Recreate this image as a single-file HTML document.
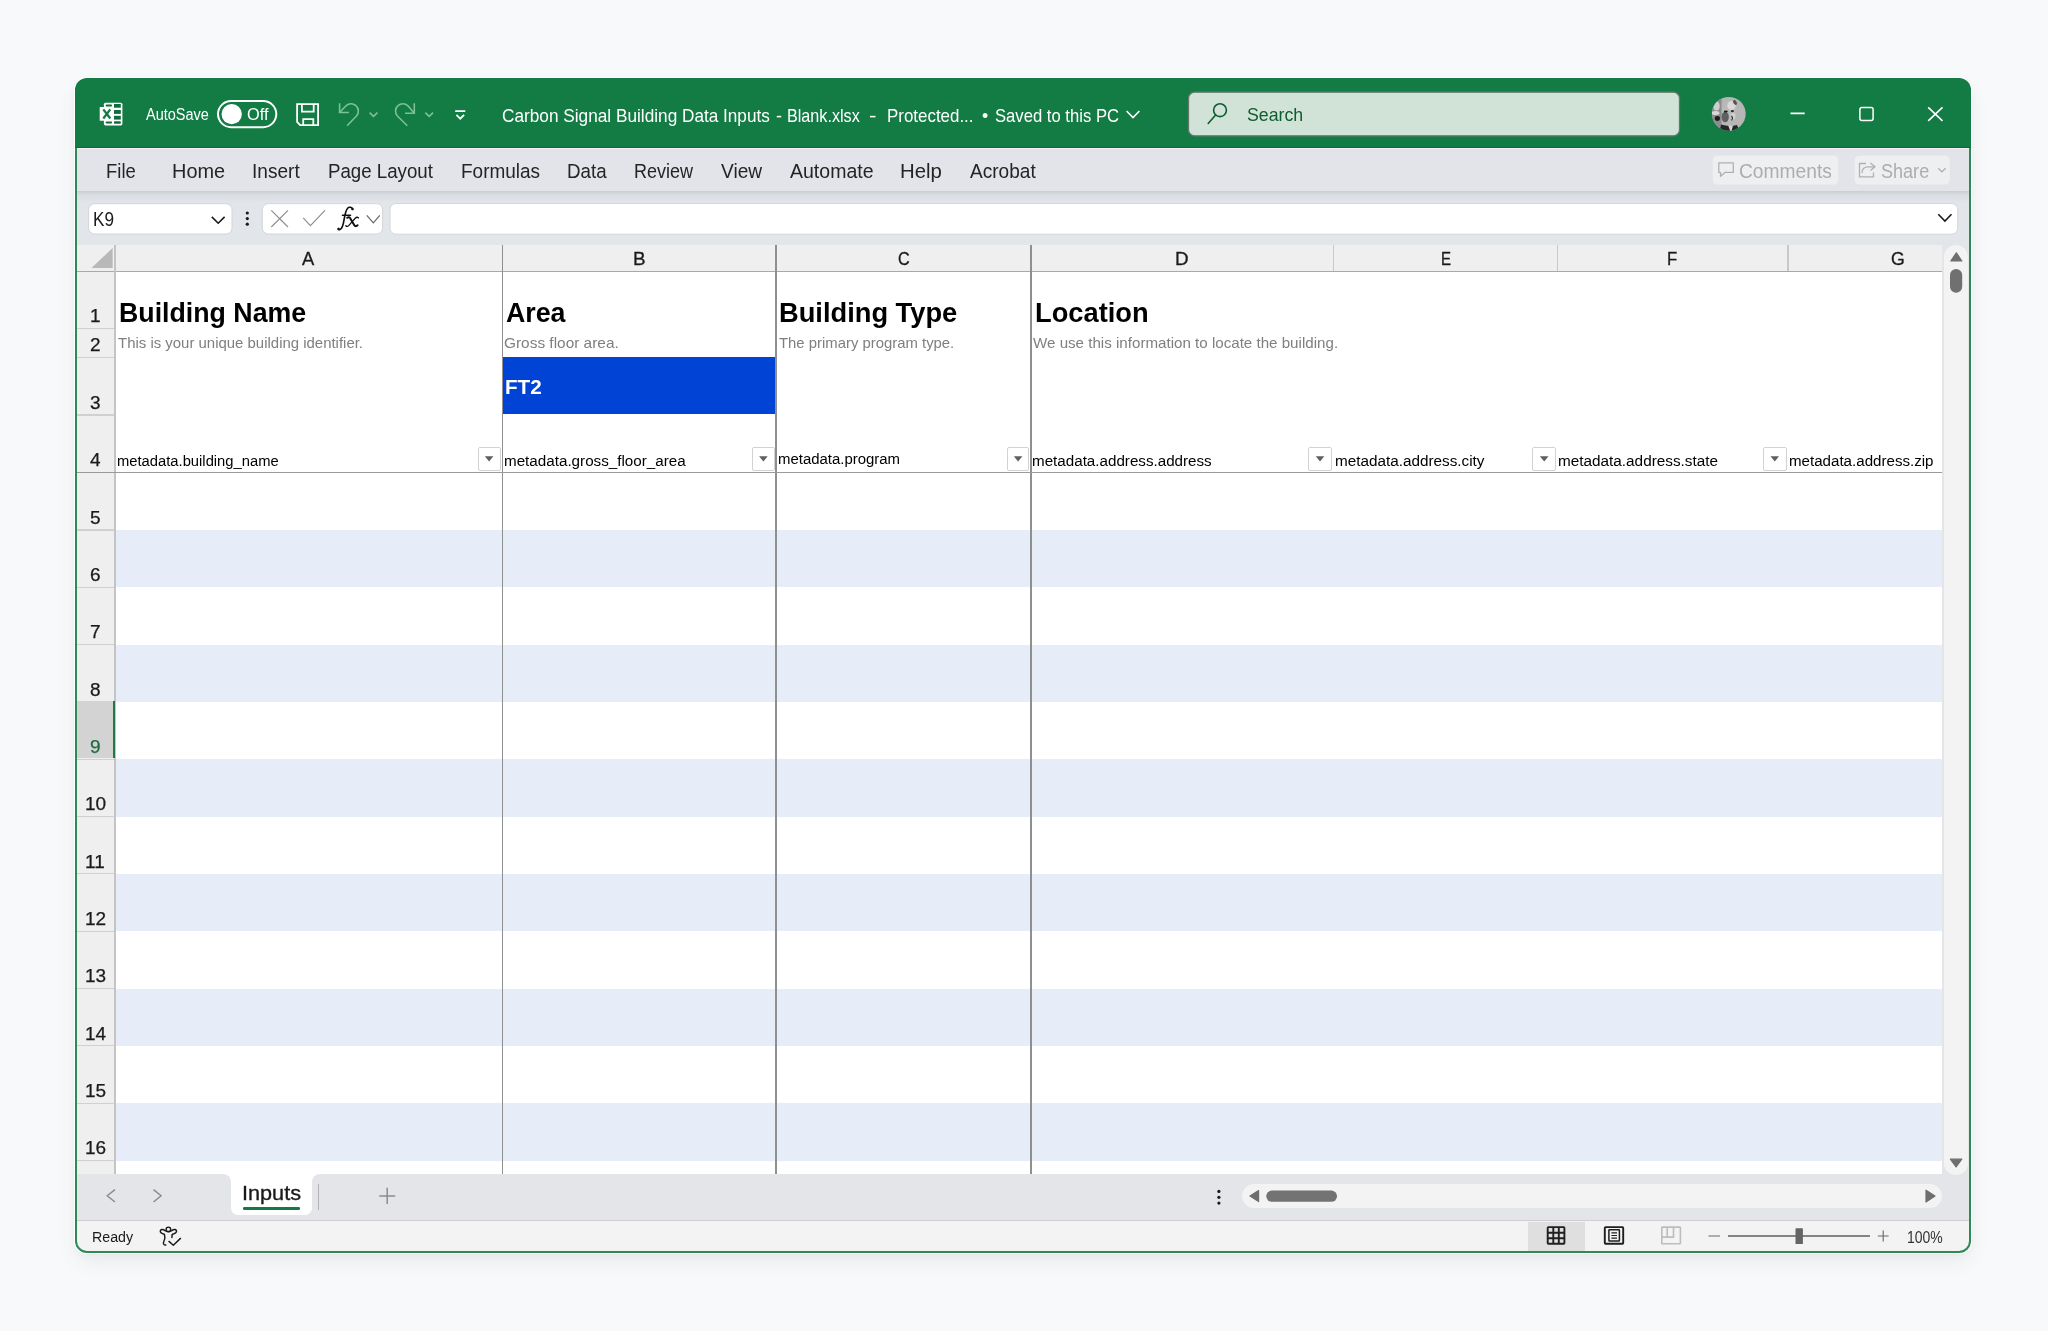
<!DOCTYPE html>
<html><head><meta charset="utf-8">
<style>
html,body{margin:0;padding:0;}
body{width:2048px;height:1331px;position:relative;overflow:hidden;background:#f8f9fa;font-family:"Liberation Sans",sans-serif;}
.a{position:absolute;}
.t{position:absolute;white-space:nowrap;line-height:1;transform-origin:0 0;}
#shadow{position:absolute;left:75px;top:78px;width:1896px;height:1175px;border-radius:12px;box-shadow:0 0 0 1px #fff,0 10px 22px rgba(0,0,0,0.055),0 3px 8px rgba(0,0,0,0.03);}
#win{position:absolute;left:0;top:0;width:2048px;height:1331px;clip-path:inset(78px 77px 78px 75px round 12px);}
#border{position:absolute;left:75px;top:78px;width:1892px;height:1171px;border:2px solid #2c8a55;box-shadow:0 0 0 1px rgba(255,255,255,0.85);border-radius:12px;clip-path:inset(70px -4px -4px -4px);}
svg{position:absolute;left:0;top:0;overflow:visible;}
</style></head><body>
<div id="shadow"></div>
<div id="win">
  <!-- base -->
  <div class="a" style="left:75px;top:78px;width:1896px;height:1175px;background:#fff"></div>
  <!-- title bar -->
  <div class="a" style="left:75px;top:78px;width:1896px;height:70.5px;background:#127c44"></div>
  <div class="a" style="left:75px;top:146.6px;width:1896px;height:1.6px;background:#0c6a37"></div>
  <div class="a" style="left:75px;top:148.2px;width:1896px;height:1px;background:#f4eef4"></div>
  <!-- ribbon -->
  <div class="a" style="left:75px;top:149.2px;width:1896px;height:42px;background:#e2e4e9"></div>
  <div class="a" style="left:75px;top:190.8px;width:1896px;height:12px;background:linear-gradient(#c9ccd1 0px,#d3d6db 2px,#dadde2 4px,#e2e5ea 12px)"></div>
  <!-- formula row -->
  <div class="a" style="left:75px;top:202.8px;width:1896px;height:42.2px;background:#e2e5ea"></div>
  <!-- grid base -->
  <div class="a" style="left:77px;top:245px;width:1865px;height:929px;background:#fff"></div>
  <!-- stripes -->
  <div class="a" style="left:115px;top:529.93px;width:1827px;height:57.33px;background:#e6ecf8"></div>
<div class="a" style="left:115px;top:644.59px;width:1827px;height:57.33px;background:#e6ecf8"></div>
<div class="a" style="left:115px;top:759.25px;width:1827px;height:57.33px;background:#e6ecf8"></div>
<div class="a" style="left:115px;top:873.91px;width:1827px;height:57.33px;background:#e6ecf8"></div>
<div class="a" style="left:115px;top:988.57px;width:1827px;height:57.33px;background:#e6ecf8"></div>
<div class="a" style="left:115px;top:1103.23px;width:1827px;height:57.33px;background:#e6ecf8"></div>
  <!-- column header -->
  <div class="a" style="left:77px;top:245px;width:1865px;height:26.5px;background:#efefef"></div>
  <div class="a" style="left:77px;top:270.8px;width:1865px;height:1.5px;background:#a9a9a9"></div>
  <!-- row header -->
  <div class="a" style="left:77px;top:272px;width:37.5px;height:902px;background:#efefef"></div>
  <div class="a" style="left:114.3px;top:245px;width:1.5px;height:929px;background:#c4c4c4"></div>
  <div class="a" style="left:77px;top:328.00px;width:37px;height:1.2px;background:#d0d0d0"></div>
<div class="a" style="left:77px;top:356.50px;width:37px;height:1.2px;background:#d0d0d0"></div>
<div class="a" style="left:77px;top:414.40px;width:37px;height:1.2px;background:#d0d0d0"></div>
<div class="a" style="left:77px;top:472.00px;width:37px;height:1.2px;background:#d0d0d0"></div>
<div class="a" style="left:77px;top:529.33px;width:37px;height:1.2px;background:#d0d0d0"></div>
<div class="a" style="left:77px;top:586.66px;width:37px;height:1.2px;background:#d0d0d0"></div>
<div class="a" style="left:77px;top:643.99px;width:37px;height:1.2px;background:#d0d0d0"></div>
<div class="a" style="left:77px;top:701.32px;width:37px;height:1.2px;background:#d0d0d0"></div>
<div class="a" style="left:77px;top:758.65px;width:37px;height:1.2px;background:#d0d0d0"></div>
<div class="a" style="left:77px;top:815.98px;width:37px;height:1.2px;background:#d0d0d0"></div>
<div class="a" style="left:77px;top:873.31px;width:37px;height:1.2px;background:#d0d0d0"></div>
<div class="a" style="left:77px;top:930.64px;width:37px;height:1.2px;background:#d0d0d0"></div>
<div class="a" style="left:77px;top:987.97px;width:37px;height:1.2px;background:#d0d0d0"></div>
<div class="a" style="left:77px;top:1045.30px;width:37px;height:1.2px;background:#d0d0d0"></div>
<div class="a" style="left:77px;top:1102.63px;width:37px;height:1.2px;background:#d0d0d0"></div>
<div class="a" style="left:77px;top:1159.96px;width:37px;height:1.2px;background:#d0d0d0"></div>
  <!-- corner triangle -->
  <svg width="2048" height="1331"><path d="M91.4 268 L112.6 248 L112.6 268 Z" fill="#b8b8b8"/></svg>
  <!-- column separators in header (light) -->
  <div class="a" style="left:1332.5px;top:245px;width:1.5px;height:26px;background:#c9c9c9"></div>
  <div class="a" style="left:1556.6px;top:245px;width:1.5px;height:26px;background:#c9c9c9"></div>
  <div class="a" style="left:1787.4px;top:245px;width:1.5px;height:26px;background:#c9c9c9"></div>
  <!-- column borders dark -->
  <div class="a" style="left:501.7px;top:245px;width:1.5px;height:929px;background:#8f8f8f"></div>
  <div class="a" style="left:775.3px;top:245px;width:1.5px;height:929px;background:#8f8f8f"></div>
  <div class="a" style="left:1030.3px;top:245px;width:1.5px;height:929px;background:#8f8f8f"></div>
  <!-- FT2 block -->
  <div class="a" style="left:503.2px;top:357.2px;width:272.1px;height:56.9px;background:#0043d5"></div>
  <!-- row 4 bottom border -->
  <div class="a" style="left:77px;top:471.6px;width:1865px;height:1.5px;background:#9a9a9a"></div>
  <!-- selected row 9 header -->
  <div class="a" style="left:77px;top:701.2px;width:37.3px;height:57.3px;background:#d3d3d3"></div>
  <div class="a" style="left:113px;top:701.2px;width:2.3px;height:57.3px;background:#1d7a45"></div>
  <div class="a" style="left:477.5px;top:447px;width:23.2px;background:#fff;border:1px solid #d2d2d2;border-radius:2px;box-sizing:border-box;height:23.8px"></div>
<svg width="2048" height="1331"><path d="M484.8 456.2 L493.4 456.2 L489.1 461.6 Z" fill="#5f5f5f"/></svg>
<div class="a" style="left:751.6px;top:447px;width:23.6px;background:#fff;border:1px solid #d2d2d2;border-radius:2px;box-sizing:border-box;height:23.8px"></div>
<svg width="2048" height="1331"><path d="M759.1 456.2 L767.7 456.2 L763.4 461.6 Z" fill="#5f5f5f"/></svg>
<div class="a" style="left:1006.8px;top:447px;width:22.7px;background:#fff;border:1px solid #d2d2d2;border-radius:2px;box-sizing:border-box;height:23.8px"></div>
<svg width="2048" height="1331"><path d="M1013.9 456.2 L1022.4 456.2 L1018.1 461.6 Z" fill="#5f5f5f"/></svg>
<div class="a" style="left:1308.3px;top:447px;width:23.5px;background:#fff;border:1px solid #d2d2d2;border-radius:2px;box-sizing:border-box;height:23.8px"></div>
<svg width="2048" height="1331"><path d="M1315.8 456.2 L1324.3 456.2 L1320.0 461.6 Z" fill="#5f5f5f"/></svg>
<div class="a" style="left:1532.4px;top:447px;width:23.5px;background:#fff;border:1px solid #d2d2d2;border-radius:2px;box-sizing:border-box;height:23.8px"></div>
<svg width="2048" height="1331"><path d="M1539.9 456.2 L1548.5 456.2 L1544.2 461.6 Z" fill="#5f5f5f"/></svg>
<div class="a" style="left:1763.0px;top:447px;width:23.5px;background:#fff;border:1px solid #d2d2d2;border-radius:2px;box-sizing:border-box;height:23.8px"></div>
<svg width="2048" height="1331"><path d="M1770.5 456.2 L1779.0 456.2 L1774.8 461.6 Z" fill="#5f5f5f"/></svg>
  <!-- vertical scrollbar -->
  <div class="a" style="left:1942px;top:245px;width:29px;height:929px;background:#e3e5e9"></div>
  <div class="a" style="left:1944.2px;top:245px;width:23.4px;height:930px;background:#f3f3f3;border-radius:12px"></div>
  <svg width="2048" height="1331">
    <path d="M1950.8 261 L1956.35 252.8 L1961.9 261 Z" fill="#6e6e6e" stroke="#6e6e6e" stroke-width="1.2" stroke-linejoin="round"/>
    <rect x="1950" y="268.9" width="12.2" height="23.9" rx="6.1" fill="#707070"/>
  </svg>
  <!-- tab bar -->
  <div class="a" style="left:77px;top:1174px;width:1865px;height:22px;background:#fff"></div>
  <div class="a" style="left:75px;top:1195px;width:1896px;height:26px;background:#e3e5e9"></div>
  <div class="a" style="left:75px;top:1174px;width:156.4px;height:47px;background:#e3e5e9;border-top-right-radius:8px"></div>
  <div class="a" style="left:312px;top:1174px;width:1659px;height:47px;background:#e3e5e9;border-top-left-radius:8px"></div>
  <div class="a" style="left:1942px;top:1174px;width:29px;height:47px;background:#e3e5e9"></div>
  <div class="a" style="left:1944.2px;top:1160px;width:23.4px;height:15px;background:#f3f3f3;border-radius:0 0 12px 12px"></div>
  <svg width="2048" height="1331"><path d="M1950.4 1159.2 L1956.1 1167 L1961.8 1159.2 Z" fill="#6e6e6e" stroke="#6e6e6e" stroke-width="1.2" stroke-linejoin="round"/></svg>
  <div class="a" style="left:231.4px;top:1170px;width:80.6px;height:44.6px;background:#fff;border-radius:0 0 7px 7px"></div>
  <div class="a" style="left:243.1px;top:1207px;width:57.2px;height:2.6px;background:#137a42;border-radius:1.3px"></div>
  <div class="a" style="left:317.7px;top:1184.4px;width:1px;height:25.2px;background:#b3b3b3"></div>
  <svg width="2048" height="1331">
    <path d="M115 1189.6 L107.2 1195.8 L115 1202" fill="none" stroke="#8a8a8a" stroke-width="1.4"/>
    <path d="M153.5 1189.6 L161.1 1195.8 L153.5 1202" fill="none" stroke="#8a8a8a" stroke-width="1.4"/>
    <path d="M379.2 1195.9 H395.2 M387.2 1187.7 V1204" fill="none" stroke="#8c8c8c" stroke-width="1.5"/>
    <circle cx="1218.9" cy="1191.4" r="1.6" fill="#1a1a1a"/><circle cx="1218.9" cy="1197.3" r="1.6" fill="#1a1a1a"/><circle cx="1218.9" cy="1203.1" r="1.6" fill="#1a1a1a"/>
  </svg>
  <div class="a" style="left:1242px;top:1184.2px;width:700.3px;height:24px;background:#f3f3f3;border-radius:12px"></div>
  <svg width="2048" height="1331">
    <path d="M1258.6 1190.6 L1250 1196.1 L1258.6 1201.6 Z" fill="#6e6e6e" stroke="#6e6e6e" stroke-width="1.2" stroke-linejoin="round"/>
    <rect x="1266.3" y="1190.5" width="70.7" height="11.3" rx="5.65" fill="#737373"/>
    <path d="M1926 1190.2 L1935 1196.1 L1926 1202 Z" fill="#6e6e6e" stroke="#6e6e6e" stroke-width="1.2" stroke-linejoin="round"/>
  </svg>
  <!-- status bar -->
  <div class="a" style="left:75px;top:1220.3px;width:1896px;height:1px;background:#cfcfcf"></div>
  <div class="a" style="left:75px;top:1221.3px;width:1896px;height:32px;background:#f3f3f3"></div>
  <div class="a" style="left:1528.3px;top:1221.5px;width:56.7px;height:30px;background:#dfdfdf"></div>
  <svg width="2048" height="1331">
  <!-- Excel logo -->
  <rect x="103.9" y="102.7" width="18.5" height="22.7" rx="1.6" fill="#fff"/>
  <g fill="#0e6d3a">
    <rect x="105.6" y="104.4" width="6.5" height="2.1" rx="1"/><rect x="114" y="104" width="6.8" height="3.7"/>
    <rect x="114" y="110" width="6.8" height="3.9"/><rect x="114" y="115.8" width="6.8" height="3.8"/>
    <rect x="105.6" y="121.4" width="6.5" height="2.2" rx="1"/><rect x="114" y="121.3" width="6.8" height="2.4" rx="0.6"/>
  </g>
  <rect x="99.7" y="107" width="13.1" height="13.8" rx="0.6" fill="#fff"/>
  <path d="M103.3 109.4 L110.3 118.5 M110.3 109.4 L103.3 118.5" stroke="#127c44" stroke-width="2.3"/>
  <!-- toggle -->
  <rect x="218" y="101" width="58.3" height="26.2" rx="13.1" fill="none" stroke="#fff" stroke-width="2"/>
  <circle cx="231.7" cy="114.1" r="10.2" fill="#fff"/>
  <!-- save -->
  <path d="M297.1 104.2 H318.1 V125.2 H300.1 L297.1 121.9 Z" fill="none" stroke="#fff" stroke-width="1.8"/>
  <path d="M301.9 104.2 V111.6 H313.7 V104.2" fill="none" stroke="#fff" stroke-width="1.8"/>
  <path d="M303.2 125.2 V119.1 H313.3 V125.2" fill="none" stroke="#fff" stroke-width="1.8"/>
  <!-- undo/redo -->
  <g fill="none" stroke="#7dbf98" stroke-width="1.6" stroke-linecap="butt" stroke-linejoin="miter">
    <path d="M339.6 103.3 V112.5 H348.9"/>
    <path d="M339.6 112.5 L345.5 106.2 A7.3 7.3 0 0 1 356.5 116 L347.1 125.7"/>
    <path d="M369.6 112.6 L373.5 116.4 L377.4 112.6"/>
    <path d="M414.3 103.3 V113.2 H405.1"/>
    <path d="M414.3 113.2 L408.4 106.2 A7.3 7.3 0 0 0 397.4 116 L407.3 125.7"/>
    <path d="M425.3 112.6 L429.2 116.4 L433.1 112.6"/>
  </g>
  <!-- customize qat -->
  <path d="M455.2 111.1 H465.3" stroke="#fff" stroke-width="1.9"/>
  <path d="M456.4 114.9 L460.25 118.6 L464.1 114.9" fill="none" stroke="#fff" stroke-width="1.9"/>
  <!-- title chevron -->
  <path d="M1126.6 111 L1133 117.6 L1139.4 111" fill="none" stroke="#fff" stroke-width="1.6"/>
  <!-- search box -->
  <rect x="1188.5" y="92.2" width="491" height="43.6" rx="6" fill="#d1e3d6" stroke="#66766b" stroke-width="1.3"/>
  <circle cx="1220" cy="110.2" r="6.4" fill="none" stroke="#0f5c31" stroke-width="1.6"/>
  <path d="M1215.6 114.9 L1208.2 123.5" stroke="#0f5c31" stroke-width="1.6" stroke-linecap="round"/>
  <!-- avatar -->
  <defs>
    <clipPath id="avc"><circle cx="1728.8" cy="113.8" r="16.9"/></clipPath>
    <filter id="avb" x="-20%" y="-20%" width="140%" height="140%"><feGaussianBlur stdDeviation="0.7"/></filter>
  </defs>
  <g clip-path="url(#avc)">
    <rect x="1710" y="95" width="38" height="38" fill="#b6b6b6"/>
    <g filter="url(#avb)">
      <rect x="1709" y="95" width="12.5" height="40" fill="#8c8c8c"/>
      <ellipse cx="1716.5" cy="106" rx="3.2" ry="4.5" fill="#cdcdcd"/>
      <ellipse cx="1715.5" cy="113" rx="4" ry="2" fill="#d8d8d8"/>
      <ellipse cx="1717.4" cy="118.5" rx="2.6" ry="2.4" fill="#1e1e1e"/>
      <ellipse cx="1729.5" cy="111" rx="7.6" ry="10.5" fill="#b9b9b9"/>
      <ellipse cx="1731.5" cy="105.5" rx="4.2" ry="4.6" fill="#d9d9d9"/>
      <ellipse cx="1725.2" cy="117" rx="3.6" ry="5.2" fill="#5e5e5e"/>
      <ellipse cx="1733" cy="116" rx="2.5" ry="3.5" fill="#cfcfcf"/>
      <ellipse cx="1725.8" cy="111.5" rx="2" ry="1.1" fill="#1a1a1a"/>
      <ellipse cx="1732.4" cy="111.2" rx="1.5" ry="1.1" fill="#2a2a2a"/>
      <path d="M1731.5 116 Q1733.5 118 1731.5 120.5" stroke="#333" stroke-width="1.1" fill="none"/>
      <ellipse cx="1735" cy="102.5" rx="1.6" ry="2.6" fill="#555" transform="rotate(-35 1735 102.5)"/>
      <path d="M1719 135 L1721 124.5 Q1729 127 1737 125 L1741 135 Z" fill="#262626"/>
      <path d="M1728.2 125.5 L1733 125.5 L1731 133 Z" fill="#d4d4d4"/>
    </g>
  </g>
  <!-- window controls -->
  <path d="M1790.5 113.4 H1804.7" stroke="#fff" stroke-width="1.6"/>
  <rect x="1859.9" y="107.6" width="13.2" height="13" rx="2" fill="none" stroke="#fff" stroke-width="1.5"/>
  <path d="M1928.2 107.3 L1942.5 120.8 M1942.5 107.3 L1928.2 120.8" stroke="#fff" stroke-width="1.6"/>
  <!-- comments / share -->
  <rect x="1712.2" y="155.1" width="126.5" height="30" rx="5" fill="#eeeff1" stroke="#e2e3e7" stroke-width="1"/>
  <rect x="1854.1" y="155.1" width="96.2" height="30" rx="5" fill="#eeeff1" stroke="#e2e3e7" stroke-width="1"/>
  <path d="M1718.8 162.8 H1733.3 V172.4 H1725 L1720.5 176.3 V172.4 H1718.8 Z" fill="none" stroke="#b0b0b0" stroke-width="1.3" stroke-linejoin="round"/>
  <path d="M1870.5 163 L1875 166.8 L1870.5 170.6 M1875 166.8 H1868 C1864 166.8 1862 169.5 1862 173" fill="none" stroke="#b0b0b0" stroke-width="1.3" stroke-linejoin="round"/>
  <path d="M1866 163.5 H1859.5 V176.8 H1873.5 V172.5" fill="none" stroke="#b0b0b0" stroke-width="1.3"/>
  <path d="M1938.2 168.3 L1941.9 171.8 L1945.6 168.3" fill="none" stroke="#b0b0b0" stroke-width="1.3"/>
  <!-- formula bar -->
  <rect x="88.6" y="203.7" width="143.4" height="30.3" rx="6" fill="#fff" stroke="#d3d5d9" stroke-width="1"/>
  <path d="M211.8 216.9 L218.2 223.2 L224.6 216.9" fill="none" stroke="#1a1a1a" stroke-width="1.6"/>
  <circle cx="247.3" cy="213" r="1.6" fill="#1a1a1a"/><circle cx="247.3" cy="218.6" r="1.6" fill="#1a1a1a"/><circle cx="247.3" cy="224.2" r="1.6" fill="#1a1a1a"/>
  <rect x="262.3" y="203.6" width="120.3" height="30.4" rx="6" fill="#fff" stroke="#d3d5d9" stroke-width="1"/>
  <path d="M271.3 210.3 L288 227 M288 210.3 L271.3 227" stroke="#8f8f8f" stroke-width="1.2"/>
  <path d="M303.2 217.8 L310.4 225.6 L325 210.3" fill="none" stroke="#8f8f8f" stroke-width="1.2"/>
  <g fill="none" stroke="#111" stroke-linecap="round">
    <path d="M352.8 209.4 C352.3 207.2 349.2 206.4 347.6 208.2 C346 210 345 214 344.2 219 C343.4 224 342.6 228.8 340 229.6 C338.8 230 338 229.3 338.2 228.6" stroke-width="1.6"/>
    <path d="M342.4 215.2 H350.6" stroke-width="1.4"/>
    <path d="M347.2 217.8 C348.5 216.8 349.8 217.1 350.5 218.7 L354.2 225 C354.9 226.3 356.2 226.6 357.6 225.3" stroke-width="2"/>
    <path d="M358.5 217.8 C357.5 217 356.2 217.1 355.2 218.3 L348.7 225.6 C347.7 226.6 346.6 226.6 345.8 225.8" stroke-width="1.3"/>
  </g>
  <circle cx="352.4" cy="208.9" r="1.25" fill="#111"/><circle cx="338.7" cy="228.9" r="1.15" fill="#111"/>
  <path d="M366.8 215.3 L373.3 222.8 L379.8 215.3" fill="none" stroke="#666" stroke-width="1.2"/>
  <rect x="390" y="203.5" width="1567.7" height="30.7" rx="6" fill="#fff" stroke="#d3d5d9" stroke-width="1"/>
  <path d="M1938.3 214.3 L1944.9 221.1 L1951.5 214.3" fill="none" stroke="#1a1a1a" stroke-width="1.6"/>
  <!-- status: accessibility -->
  <g fill="none" stroke="#1a1a1a" stroke-width="1.45" stroke-linecap="round" stroke-linejoin="round">
    <circle cx="168.4" cy="1229.4" r="2.3"/>
    <path d="M164.4 1234.4 C162 1233.6 159.6 1232.6 160.4 1230.6 C161.3 1228.8 163.4 1229.6 165 1230.6 Q168.4 1232.5 171.8 1230.6 C173.4 1229.6 175.5 1228.8 176.4 1230.6 C177.2 1232.6 174.8 1233.6 172.4 1234.4"/>
    <path d="M164.4 1234.4 C165.2 1236.6 165 1239 164 1241 C163 1243 163.2 1245.4 165.8 1245"/>
    <path d="M172.4 1234.4 C171.8 1235.4 171.9 1236.6 171.9 1237.6"/>
    <path d="M169 1241.4 L173.3 1245.2 L180.5 1238.4"/>
  </g>
  <!-- view icons -->
  <g fill="none" stroke="#1f1f1f" stroke-width="1.9">
    <rect x="1547.7" y="1227.1" width="16.7" height="16.7" rx="0.8"/>
    <path d="M1553.3 1227.1 V1243.8 M1558.8 1227.1 V1243.8 M1547.7 1232.7 H1564.4 M1547.7 1238.2 H1564.4"/>
    <rect x="1604.8" y="1227.1" width="18.4" height="16.7" rx="0.8"/>
    <rect x="1608.9" y="1229.8" width="10.5" height="11.3" rx="0.5" stroke-width="1.5"/>
    <path d="M1611.4 1232.9 H1617 M1611.4 1235.5 H1617 M1611.4 1238.1 H1617" stroke-width="1.1"/>
  </g>
  <g fill="none" stroke="#bdbdbd" stroke-width="1.6">
    <rect x="1661.8" y="1227.1" width="18.6" height="16.7" rx="0.5"/>
    <path d="M1661.8 1237.1 H1673.5 V1227.1 M1667.2 1227.1 V1237.1"/>
  </g>
  <!-- zoom slider -->
  <path d="M1708.5 1236 H1720 M1877.8 1236 H1888.6 M1883.2 1230.6 V1241.4" stroke="#6a6a6a" stroke-width="1.15"/>
  <path d="M1728 1236 H1870" stroke="#5f5f5f" stroke-width="1.4"/>
  <rect x="1795.5" y="1228.3" width="7.4" height="15.8" rx="0.6" fill="#646464"/>
</svg>

  <div class="t" style="left:145.70px;top:107.00px;font-size:15.80px;font-weight:400;color:#ffffff;transform:scaleX(0.9182);">AutoSave</div>
<div class="t" style="left:246.87px;top:107.00px;font-size:15.57px;font-weight:400;color:#ffffff;transform:scaleX(1.0477);">Off</div>
<div class="t" style="left:502.24px;top:108.00px;font-size:17.90px;font-weight:400;color:#ffffff;transform:scaleX(0.9630);">Carbon Signal Building</div>
<div class="t" style="left:682.33px;top:108.00px;font-size:17.90px;font-weight:400;color:#ffffff;transform:scaleX(0.9598);">Data Inputs</div>
<div class="t" style="left:775.59px;top:108.00px;font-size:17.90px;font-weight:400;color:#ffffff;transform:scaleX(1.0033);">-</div>
<div class="t" style="left:786.91px;top:108.00px;font-size:17.90px;font-weight:400;color:#ffffff;transform:scaleX(0.9032);">Blank.xlsx</div>
<div class="t" style="left:869.49px;top:108.00px;font-size:17.90px;font-weight:400;color:#ffffff;transform:scaleX(1.2541);">-</div>
<div class="t" style="left:886.55px;top:108.00px;font-size:17.90px;font-weight:400;color:#ffffff;transform:scaleX(0.9456);">Protected...</div>
<div class="t" style="left:982.49px;top:108.00px;font-size:17.90px;font-weight:400;color:#ffffff;transform:scaleX(0.9932);">•</div>
<div class="t" style="left:995.25px;top:108.00px;font-size:17.90px;font-weight:400;color:#ffffff;transform:scaleX(0.9307);">Saved to this PC</div>
<div class="t" style="left:1246.90px;top:106.00px;font-size:18.43px;font-weight:400;color:#0f5c31;transform:scaleX(0.9629);">Search</div>
<div class="t" style="left:106.42px;top:162.00px;font-size:19.86px;font-weight:400;color:#242424;transform:scaleX(0.9296);">File</div>
<div class="t" style="left:171.51px;top:162.00px;font-size:19.86px;font-weight:400;color:#242424;transform:scaleX(1.0033);">Home</div>
<div class="t" style="left:251.68px;top:162.00px;font-size:19.86px;font-weight:400;color:#242424;transform:scaleX(0.9612);">Insert</div>
<div class="t" style="left:328.31px;top:162.00px;font-size:19.86px;font-weight:400;color:#242424;transform:scaleX(0.9408);">Page Layout</div>
<div class="t" style="left:460.78px;top:162.00px;font-size:19.86px;font-weight:400;color:#242424;transform:scaleX(0.9551);">Formulas</div>
<div class="t" style="left:566.70px;top:162.00px;font-size:19.86px;font-weight:400;color:#242424;transform:scaleX(0.9428);">Data</div>
<div class="t" style="left:634.46px;top:162.00px;font-size:19.86px;font-weight:400;color:#242424;transform:scaleX(0.9066);">Review</div>
<div class="t" style="left:720.60px;top:162.00px;font-size:19.86px;font-weight:400;color:#242424;transform:scaleX(0.9627);">View</div>
<div class="t" style="left:789.90px;top:162.00px;font-size:19.86px;font-weight:400;color:#242424;transform:scaleX(0.9824);">Automate</div>
<div class="t" style="left:899.97px;top:162.00px;font-size:19.86px;font-weight:400;color:#242424;transform:scaleX(1.0255);">Help</div>
<div class="t" style="left:970.00px;top:162.00px;font-size:19.86px;font-weight:400;color:#242424;transform:scaleX(0.9604);">Acrobat</div>
<div class="t" style="left:1739.44px;top:162.00px;font-size:19.57px;font-weight:400;color:#adadad;transform:scaleX(0.9821);">Comments</div>
<div class="t" style="left:1881.49px;top:162.00px;font-size:19.57px;font-weight:400;color:#adadad;transform:scaleX(0.9229);">Share</div>
<div class="t" style="left:92.83px;top:210.00px;font-size:19.57px;font-weight:400;color:#1a1a1a;transform:scaleX(0.8775);">K9</div>
<div class="t" style="left:302.40px;top:251.00px;font-size:17.83px;font-weight:400;color:#1a1a1a;transform:scaleX(1.0292);-webkit-text-stroke:0.3px #1a1a1a;">A</div>
<div class="t" style="left:633.19px;top:251.00px;font-size:17.83px;font-weight:400;color:#1a1a1a;transform:scaleX(1.0590);-webkit-text-stroke:0.3px #1a1a1a;">B</div>
<div class="t" style="left:898.39px;top:251.00px;font-size:17.83px;font-weight:400;color:#1a1a1a;transform:scaleX(0.9099);-webkit-text-stroke:0.3px #1a1a1a;">C</div>
<div class="t" style="left:1175.29px;top:251.00px;font-size:17.83px;font-weight:400;color:#1a1a1a;transform:scaleX(1.0560);-webkit-text-stroke:0.3px #1a1a1a;">D</div>
<div class="t" style="left:1440.70px;top:251.00px;font-size:17.83px;font-weight:400;color:#1a1a1a;transform:scaleX(0.8440);-webkit-text-stroke:0.3px #1a1a1a;">E</div>
<div class="t" style="left:1667.46px;top:251.00px;font-size:17.83px;font-weight:400;color:#1a1a1a;transform:scaleX(0.9388);-webkit-text-stroke:0.3px #1a1a1a;">F</div>
<div class="t" style="left:1891.11px;top:251.00px;font-size:17.83px;font-weight:400;color:#1a1a1a;transform:scaleX(0.9935);-webkit-text-stroke:0.3px #1a1a1a;">G</div>
<div class="t" style="left:90.04px;top:308.00px;font-size:17.60px;font-weight:400;color:#1a1a1a;transform:scaleX(1.0800);-webkit-text-stroke:0.25px #1a1a1a;">1</div>
<div class="t" style="left:90.33px;top:337.00px;font-size:17.60px;font-weight:400;color:#1a1a1a;transform:scaleX(1.0800);-webkit-text-stroke:0.25px #1a1a1a;">2</div>
<div class="t" style="left:90.37px;top:395.00px;font-size:17.60px;font-weight:400;color:#1a1a1a;transform:scaleX(1.0800);-webkit-text-stroke:0.25px #1a1a1a;">3</div>
<div class="t" style="left:90.37px;top:452.00px;font-size:17.60px;font-weight:400;color:#1a1a1a;transform:scaleX(1.0800);-webkit-text-stroke:0.25px #1a1a1a;">4</div>
<div class="t" style="left:90.33px;top:510.00px;font-size:17.60px;font-weight:400;color:#1a1a1a;transform:scaleX(1.0800);-webkit-text-stroke:0.25px #1a1a1a;">5</div>
<div class="t" style="left:90.23px;top:567.00px;font-size:17.60px;font-weight:400;color:#1a1a1a;transform:scaleX(1.0800);-webkit-text-stroke:0.25px #1a1a1a;">6</div>
<div class="t" style="left:90.33px;top:624.00px;font-size:17.60px;font-weight:400;color:#1a1a1a;transform:scaleX(1.0800);-webkit-text-stroke:0.25px #1a1a1a;">7</div>
<div class="t" style="left:90.33px;top:682.00px;font-size:17.60px;font-weight:400;color:#1a1a1a;transform:scaleX(1.0800);-webkit-text-stroke:0.25px #1a1a1a;">8</div>
<div class="t" style="left:90.33px;top:739.00px;font-size:17.60px;font-weight:400;color:#1d6b3d;transform:scaleX(1.0800);-webkit-text-stroke:0.25px #1d6b3d;">9</div>
<div class="t" style="left:84.67px;top:796.00px;font-size:17.60px;font-weight:400;color:#1a1a1a;transform:scaleX(1.0800);-webkit-text-stroke:0.25px #1a1a1a;">10</div>
<div class="t" style="left:85.48px;top:854.00px;font-size:17.60px;font-weight:400;color:#1a1a1a;transform:scaleX(1.0800);-webkit-text-stroke:0.25px #1a1a1a;">11</div>
<div class="t" style="left:84.81px;top:911.00px;font-size:17.60px;font-weight:400;color:#1a1a1a;transform:scaleX(1.0800);-webkit-text-stroke:0.25px #1a1a1a;">12</div>
<div class="t" style="left:84.72px;top:968.00px;font-size:17.60px;font-weight:400;color:#1a1a1a;transform:scaleX(1.0800);-webkit-text-stroke:0.25px #1a1a1a;">13</div>
<div class="t" style="left:84.58px;top:1026.00px;font-size:17.60px;font-weight:400;color:#1a1a1a;transform:scaleX(1.0800);-webkit-text-stroke:0.25px #1a1a1a;">14</div>
<div class="t" style="left:84.72px;top:1083.00px;font-size:17.60px;font-weight:400;color:#1a1a1a;transform:scaleX(1.0800);-webkit-text-stroke:0.25px #1a1a1a;">15</div>
<div class="t" style="left:84.72px;top:1140.00px;font-size:17.60px;font-weight:400;color:#1a1a1a;transform:scaleX(1.0800);-webkit-text-stroke:0.25px #1a1a1a;">16</div>
<div class="t" style="left:119.46px;top:300.00px;font-size:26.75px;font-weight:700;color:#000;transform:scaleX(0.9994);">Building Name</div>
<div class="t" style="left:117.90px;top:336.00px;font-size:14.95px;font-weight:400;color:#7f7f7f;transform:scaleX(1.0003);">This is your unique building identifier.</div>
<div class="t" style="left:116.94px;top:454.00px;font-size:14.90px;font-weight:400;color:#000;transform:scaleX(0.9914);">metadata.building_name</div>
<div class="t" style="left:505.93px;top:300.00px;font-size:26.75px;font-weight:700;color:#000;transform:scaleX(0.9997);">Area</div>
<div class="t" style="left:504.33px;top:336.00px;font-size:14.95px;font-weight:400;color:#7f7f7f;transform:scaleX(1.0313);">Gross floor area.</div>
<div class="t" style="left:504.66px;top:377.00px;font-size:20.54px;font-weight:700;color:#fff;transform:scaleX(1.0058);">FT2</div>
<div class="t" style="left:504.11px;top:454.00px;font-size:14.90px;font-weight:400;color:#000;transform:scaleX(1.0210);">metadata.gross_floor_area</div>
<div class="t" style="left:779.43px;top:300.00px;font-size:26.75px;font-weight:700;color:#000;transform:scaleX(1.0193);">Building Type</div>
<div class="t" style="left:778.80px;top:336.00px;font-size:14.95px;font-weight:400;color:#7f7f7f;transform:scaleX(0.9958);">The primary program type.</div>
<div class="t" style="left:778.13px;top:452.00px;font-size:14.90px;font-weight:400;color:#000;transform:scaleX(1.0027);">metadata.program</div>
<div class="t" style="left:1034.63px;top:300.00px;font-size:26.75px;font-weight:700;color:#000;transform:scaleX(1.0197);">Location</div>
<div class="t" style="left:1033.02px;top:336.00px;font-size:14.95px;font-weight:400;color:#7f7f7f;transform:scaleX(1.0131);">We use this information to locate the building.</div>
<div class="t" style="left:1032.01px;top:454.00px;font-size:14.90px;font-weight:400;color:#000;transform:scaleX(1.0193);">metadata.address.address</div>
<div class="t" style="left:1334.51px;top:454.00px;font-size:14.90px;font-weight:400;color:#000;transform:scaleX(1.0260);">metadata.address.city</div>
<div class="t" style="left:1558.10px;top:454.00px;font-size:14.90px;font-weight:400;color:#000;transform:scaleX(1.0283);">metadata.address.state</div>
<div class="t" style="left:1789.32px;top:454.00px;font-size:14.90px;font-weight:400;color:#000;transform:scaleX(1.0151);">metadata.address.zip</div>
<div class="t" style="left:242.05px;top:1183.00px;font-size:20.72px;font-weight:400;color:#1a1a1a;transform:scaleX(1.0448);-webkit-text-stroke:0.35px #1a1a1a;">Inputs</div>
<div class="t" style="left:91.66px;top:1229.00px;font-size:15.36px;font-weight:400;color:#1a1a1a;transform:scaleX(0.9266);">Ready</div>
<div class="t" style="left:1907.45px;top:1230.00px;font-size:15.80px;font-weight:400;color:#333;transform:scaleX(0.8862);">100%</div>
</div>
<div id="border"></div>
</body></html>
